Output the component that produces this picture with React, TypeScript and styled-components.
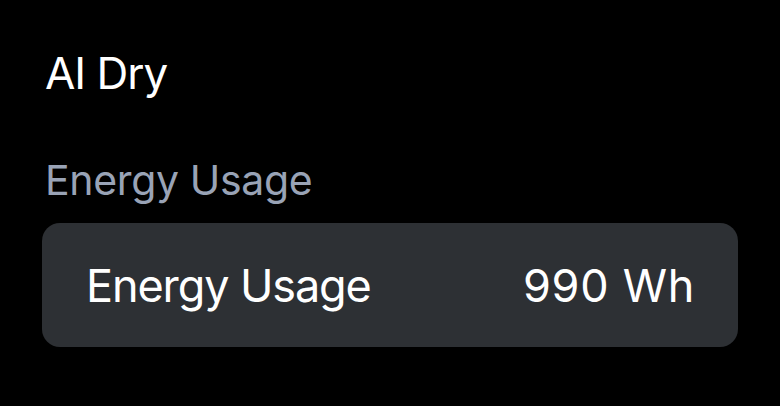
import React from "react";
import styled, { createGlobalStyle } from "styled-components";

const GlobalStyle = createGlobalStyle`
  html, body {
    margin: 0;
    padding: 0;
    background: #000;
  }
  body {
    font-family: Inter, "Noto Sans", "Liberation Sans", sans-serif;
    -webkit-font-smoothing: antialiased;
  }
`;

const Screen = styled.div`
  width: 780px;
  height: 406px;
  background: #000;
  padding: 0 42px;
  box-sizing: border-box;
  display: flex;
  flex-direction: column;
`;

const Title = styled.h1`
  margin: 0;
  padding: 48px 0 0 3px;
  font-size: 44px;
  font-weight: 400;
  line-height: 50px;
  color: #fff;
  letter-spacing: -1px;
`;

const SectionLabel = styled.h2`
  margin: 0;
  padding: 60px 0 0 3px;
  font-size: 41px;
  font-weight: 400;
  line-height: 44px;
  color: #99a3b6;
  letter-spacing: -0.35px;
`;

const Card = styled.div`
  margin-top: 21px;
  height: 124px;
  border-radius: 18px;
  background: #2d3034;
  display: flex;
  align-items: center;
  justify-content: space-between;
  padding: 0 43px 0 44px;
`;

const RowText = styled.span<{ $tracking?: number }>`
  font-size: 45px;
  font-weight: 400;
  color: #fff;
  letter-spacing: ${(p) => p.$tracking ?? 0}px;
`;

export default function App() {
  return (
    <>
      <GlobalStyle />
      <Screen>
        <Title>AI Dry</Title>
        <SectionLabel>Energy Usage</SectionLabel>
        <Card>
          <RowText $tracking={-1.1}>Energy Usage</RowText>
          <RowText $tracking={0.7}>990 Wh</RowText>
        </Card>
      </Screen>
    </>
  );
}
